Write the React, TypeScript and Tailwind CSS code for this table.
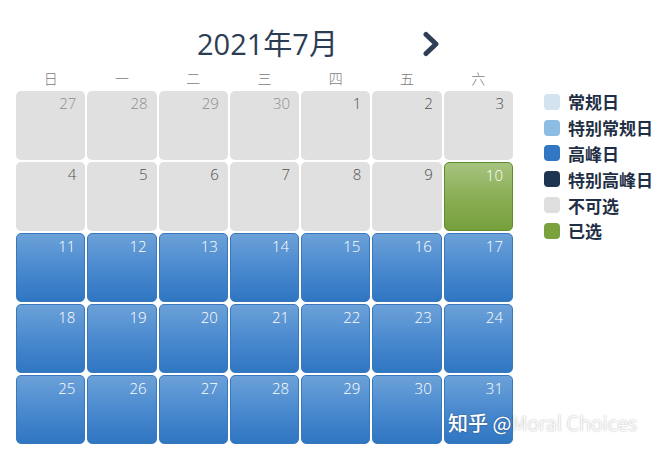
import React from 'react';

type Kind = 'off' | 'prev' | 'peak' | 'picked';

const legend = [
  { label: '常规日', color: 'bg-[#d3e3f0]' },
  { label: '特别常规日', color: 'bg-[#8dbde2]' },
  { label: '高峰日', color: 'bg-[#3277c4]' },
  { label: '特别高峰日', color: 'bg-[#1e3552]' },
  { label: '不可选', color: 'bg-[#dedede]' },
  { label: '已选', color: 'bg-[#7aa33f]' },
];

const weekdays = ['日', '一', '二', '三', '四', '五', '六'];

// 6/27 .. 7/31
const days: { n: number; kind: Kind }[] = [
  ...[27, 28, 29, 30].map((n) => ({ n, kind: 'prev' as Kind })),
  ...Array.from({ length: 31 }, (_, i) => {
    const n = i + 1;
    let kind: Kind = 'off';
    if (n === 10) kind = 'picked';
    else if (n > 10) kind = 'peak';
    return { n, kind };
  }),
];

const cellStyle: Record<Kind, string> = {
  prev: 'bg-[#e0e0e0] text-[#8e8e8e]',
  off: 'bg-[#e0e0e0] text-[#505050]',
  peak: 'bg-gradient-to-b from-[#6ca1d8] via-[#4a8acf] to-[#2f76c2] text-white border border-[#3a78bd]',
  picked: 'bg-gradient-to-b from-[#a7c47f] via-[#8aae55] to-[#76a03c] text-white border border-[#5f8c2e]',
};

const Chevron = () => (
  <svg width="20" height="26" viewBox="0 0 20 26" fill="none">
    <path d="M5 3.5 L15 13 L5 22.5" stroke="#2d3e55" strokeWidth="5" strokeLinecap="round" strokeLinejoin="round" />
  </svg>
);

export default function App() {
  return (
    <div className="relative w-[657px] h-[453px] bg-white overflow-hidden font-['Open_Sans','Noto_Sans_CJK_SC',sans-serif]">
      <div className="flex pt-[26px]">
        {/* Calendar */}
        <div className="ml-4 w-[497px]">
          <div className="grid grid-cols-7 gap-[2px] h-9 items-center">
            <div className="col-start-3 col-span-3 text-center text-[29px] leading-9 text-[#2b3d54] pl-[6px]">
              2021年7月
            </div>
            <div className="flex justify-end pr-[1px]">
              <Chevron />
            </div>
          </div>

          <div className="grid grid-cols-7 gap-[2px] mt-[6px] h-5 items-center">
            {weekdays.map((d) => (
              <div key={d} className="text-center text-[14px] leading-5 text-[#7c7c7c] font-['Noto_Sans_CJK_SC',sans-serif] font-light">
                {d}
              </div>
            ))}
          </div>

          <div className="grid grid-cols-7 auto-rows-[69px] gap-[2px] mt-[3px]">
            {days.map((d, i) => (
              <div
                key={i}
                className={`rounded-[5px] flex justify-end pr-[9px] pt-[5px] text-[15px] font-light leading-none ${cellStyle[d.kind]}`}
              >
                {d.n}
              </div>
            ))}
          </div>
        </div>

        {/* Legend */}
        <div className="ml-[31px] mt-[63px] flex flex-col">
          {legend.map((l) => (
            <div key={l.label} className="flex items-center gap-2 h-[25.8px]">
              <span className={`w-4 h-4 rounded-[4px] ${l.color}`} />
              <span className="text-[17px] font-bold text-[#1f2f45] font-['Noto_Sans_CJK_SC',sans-serif] leading-none">
                {l.label}
              </span>
            </div>
          ))}
        </div>
      </div>

      {/* watermark */}
      <div className="absolute left-[448px] top-[411px] text-[20px] leading-6 text-white [text-shadow:0_0_2px_rgba(0,0,0,0.4)] font-['Noto_Sans_CJK_SC',sans-serif]">
        <span className="font-medium">知乎</span> @<span className="font-light">Moral Choices</span>
      </div>
    </div>
  );
}
